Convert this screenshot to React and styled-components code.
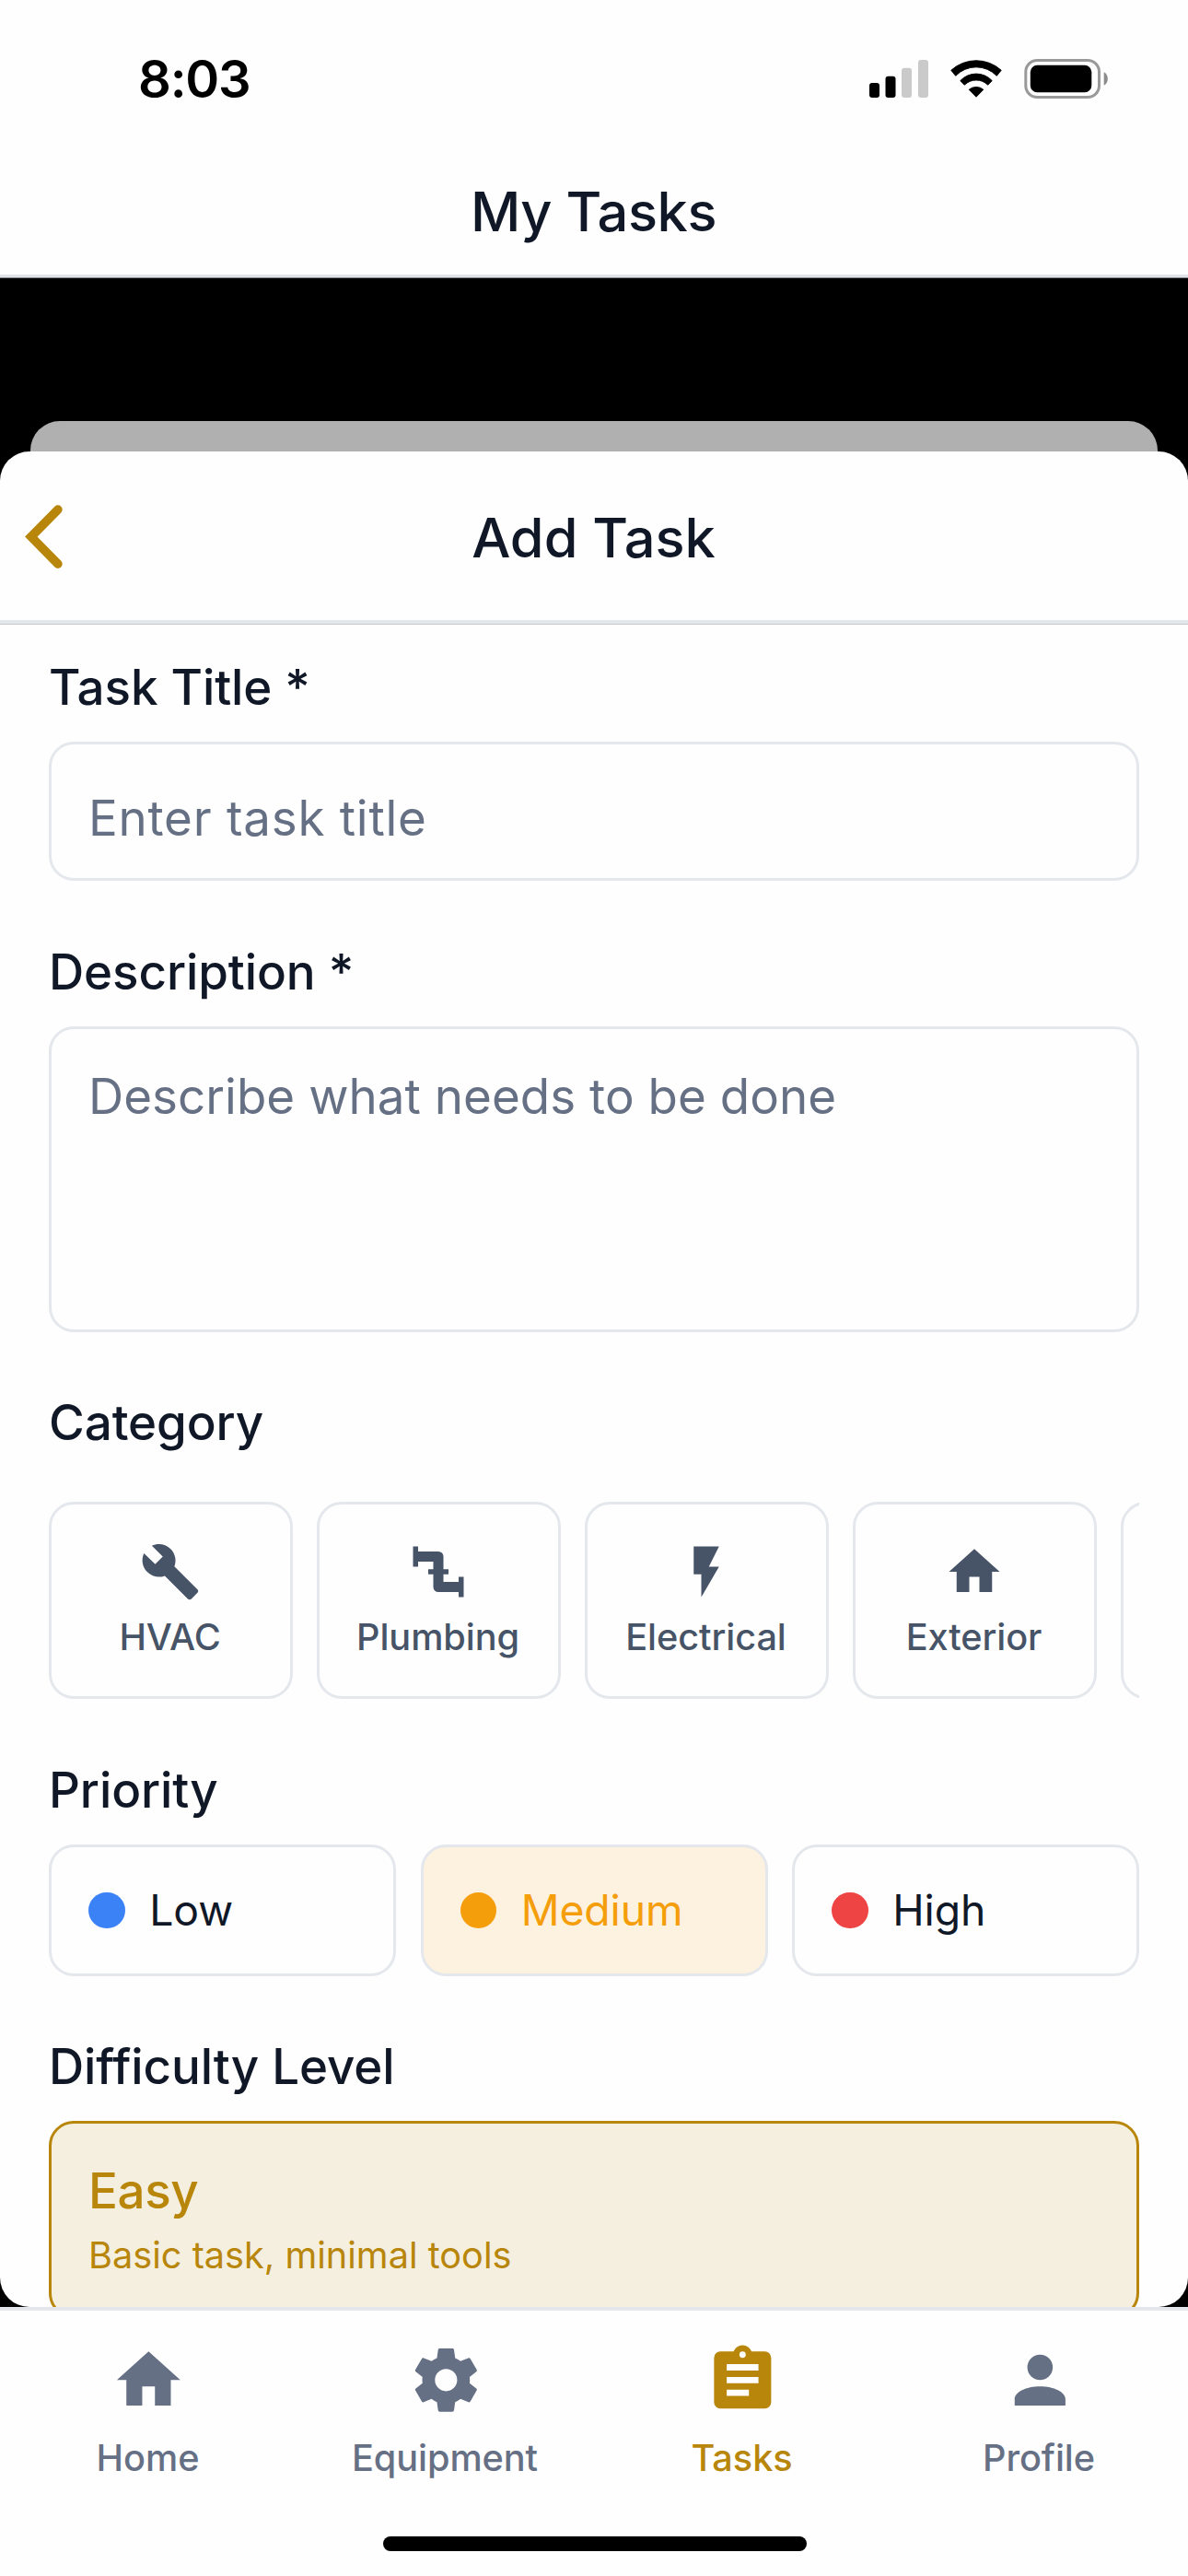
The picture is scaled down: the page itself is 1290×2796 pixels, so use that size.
import React from "react";
import styled, { createGlobalStyle } from "styled-components";

const c = {
  text: "#101828",
  secondary: "#475467",
  muted: "#667085",
  border: "#e4e7ec",
  surface: "#fefefe",
  gold: "#b8860b",
  goldTint: "#f5efdf",
  amber: "#f59e0b",
  amberTint: "#fdf1e0",
};

const GlobalStyle = createGlobalStyle`
  *, *::before, *::after { box-sizing: border-box; }
  body { margin: 0; background: #000; font-family: Inter, "Liberation Sans", sans-serif; }
`;

const Screen = styled.div`
  width: 1290px;
  height: 2796px;
  display: flex;
  flex-direction: column;
  overflow: hidden;
  background: #000;
  color: ${c.text};
  letter-spacing: -0.08px;
`;

const TopBar = styled.header`
  height: 302px;
  flex: none;
  display: flex;
  flex-direction: column;
  background: ${c.surface};
  border-bottom: 1px solid #8a8a8c;
  box-shadow: inset 0 -3px 0 #e0e3e8;
`;

const StatusBar = styled.div`
  height: 172px;
  padding: 0 87px 0 150px;
  display: flex;
  align-items: center;
  justify-content: space-between;
`;

const Clock = styled.span`
  font-size: 56px;
  font-weight: 600;
  line-height: 60px;
  letter-spacing: -1.2px;
  color: #000;
`;

const ScreenTitle = styled.h1`
  margin: 0;
  text-align: center;
  font-size: 59.5px;
  line-height: 72px;
  font-weight: 500;
  padding: ${(p) => p.$top || 0}px 1px 0 0;
  letter-spacing: ${(p) => p.$tracking || 0}px;
`;

const Backdrop = styled.main`
  flex: none;
  height: 2202px;
  padding-top: 155px;
  display: flex;
  flex-direction: column;
`;

const SheetBehind = styled.div`
  flex: none;
  height: 66px;
  margin: 0 33px -33px;
  border-radius: 32px 32px 0 0;
  background: #b0b0b0;
`;

const Sheet = styled.section`
  flex: 1;
  min-height: 0;
  display: flex;
  flex-direction: column;
  overflow: hidden;
  border-radius: 32px;
  background: ${c.surface};
  z-index: 1;
`;

const SheetHeader = styled.div`
  flex: none;
  height: 188px;
  padding-bottom: 1px;
  display: grid;
  grid-template-columns: 120px 1fr 120px;
  align-items: center;
  border-bottom: 1px solid #c6c8ca;
  box-shadow: inset 0 -4px 0 #e4e7ea;
`;

const BackButton = styled.button`
  border: 0;
  background: none;
  padding: 0 0 0 27px;
  height: 70px;
  display: flex;
`;

const Form = styled.div`
  flex: none;
  display: flex;
  flex-direction: column;
  padding: 36px 53px 0;
`;

const Field = styled.div`
  display: flex;
  flex-direction: column;
  gap: ${(p) => p.$gap || 27}px;
  margin-bottom: ${(p) => p.$after || 67}px;
`;

const Label = styled.div`
  font-size: 52.9px;
  line-height: 64px;
  font-weight: 500;
`;

const InputBox = styled.div`
  height: ${(p) => p.$height}px;
  padding: ${(p) => p.$top}px 40px 0;
  border: 3px solid ${c.border};
  border-radius: 27px;
  color: ${c.muted};
  font-size: 52.9px;
  line-height: 64px;
  letter-spacing: ${(p) => p.$tracking || 0}px;
`;

const CategoryRow = styled.div`
  display: flex;
  gap: 26.4px;
  overflow: hidden;
`;

const CategoryCard = styled.div`
  flex: none;
  width: 264.6px;
  height: 214px;
  padding-top: 40px;
  display: flex;
  flex-direction: column;
  align-items: center;
  gap: 14px;
  border: 3px solid ${c.border};
  border-radius: 27px;
  color: ${c.secondary};
`;

const Caption = styled.span`
  margin-right: 1.5px;
  font-size: 39.7px;
  line-height: 48px;
  font-weight: 500;
`;

const PriorityRow = styled.div`
  display: grid;
  grid-template-columns: repeat(3, 1fr);
  gap: 26.5px;
`;

const PriorityOption = styled.div`
  height: 143px;
  padding-left: 40px;
  display: flex;
  align-items: center;
  gap: 26.5px;
  border: 3px solid ${c.border};
  border-radius: 27px;
  font-size: 46.3px;
  line-height: 56px;
  color: ${(p) => (p.$selected ? p.$color : c.text)};
  background: ${(p) => (p.$selected ? c.amberTint : "transparent")};
`;

const PriorityName = styled.span`
  padding-bottom: 2px;
`;

const Dot = styled.span`
  width: 39.7px;
  height: 39.7px;
  border-radius: 50%;
  background: ${(p) => p.$color};
`;

const DifficultyCard = styled.div`
  display: flex;
  flex-direction: column;
  gap: 14px;
  padding: 41px 40px;
  border: 3px solid ${c.gold};
  border-radius: 27px;
  background: ${c.goldTint};
  color: ${c.gold};
`;

const DifficultyName = styled.div`
  font-size: 52.9px;
  line-height: 64px;
  font-weight: 500;
  letter-spacing: -0.4px;
`;

const DifficultyHint = styled.div`
  font-size: 39.7px;
  line-height: 48px;
  letter-spacing: 0;
`;

const TabBar = styled.nav`
  flex: none;
  height: 292px;
  display: flex;
  flex-direction: column;
  justify-content: space-between;
  align-items: center;
  padding: 34px 0 27px;
  border-top: 4px solid ${c.border};
  background: ${c.surface};
`;

const Tabs = styled.div`
  width: 100%;
  display: grid;
  grid-template-columns: repeat(4, 1fr);
`;

const Tab = styled.div`
  display: flex;
  flex-direction: column;
  align-items: center;
  gap: 19px;
  color: ${(p) => (p.$active ? c.gold : c.muted)};

  svg {
    margin-left: 1px;
  }
`;

const HomeIndicator = styled.div`
  width: 460px;
  height: 16px;
  margin-left: 1px;
  border-radius: 8px;
  background: #000;
`;

const paths = {
  wrench:
    "M22.7,19L13.6,9.9C14.5,7.6 14,4.9 12.1,3C10.1,1 7.1,0.6 4.7,1.7L9,6L6,9L1.6,4.7C0.4,7.1 0.9,10.1 2.9,12.1C4.8,14 7.5,14.5 9.8,13.6L18.9,22.7C19.3,23.1 19.9,23.1 20.3,22.7L22.6,20.4C23.1,20 23.1,19.3 22.7,19Z",
  pipe: "M22,14H20V16H14V13H16V11H14V6A2,2 0 0,0 12,4H4V2H2V10H4V8H10V11H8V13H10V18A2,2 0 0,0 12,20H20V22H22Z",
  flash: "M7,2V13H10V22L17,10H13L17,2H7Z",
  home: "M10,20V14H14V20H19V12H22L12,3L2,12H5V20H10Z",
  cog: "M12,15.5A3.5,3.5 0 0,1 8.5,12A3.5,3.5 0 0,1 12,8.5A3.5,3.5 0 0,1 15.5,12A3.5,3.5 0 0,1 12,15.5M19.43,12.97C19.47,12.65 19.5,12.33 19.5,12C19.5,11.67 19.47,11.34 19.43,11L21.54,9.37C21.73,9.22 21.78,8.95 21.66,8.73L19.66,5.27C19.54,5.05 19.27,4.96 19.05,5.05L16.56,6.05C16.04,5.66 15.5,5.32 14.87,5.07L14.5,2.42C14.46,2.18 14.25,2 14,2H10C9.75,2 9.54,2.18 9.5,2.42L9.13,5.07C8.5,5.32 7.96,5.66 7.44,6.05L4.95,5.05C4.73,4.96 4.46,5.05 4.34,5.27L2.34,8.73C2.21,8.95 2.27,9.22 2.46,9.37L4.57,11C4.53,11.34 4.5,11.67 4.5,12C4.5,12.33 4.53,12.65 4.57,12.97L2.46,14.63C2.27,14.78 2.21,15.05 2.34,15.27L4.34,18.73C4.46,18.95 4.73,19.03 4.95,18.95L7.44,17.94C7.96,18.34 8.5,18.68 9.13,18.93L9.5,21.58C9.54,21.82 9.75,22 10,22H14C14.25,22 14.46,21.82 14.5,21.58L14.87,18.93C15.5,18.67 16.04,18.34 16.56,17.94L19.05,18.95C19.27,19.03 19.54,18.95 19.66,18.73L21.66,15.27C21.78,15.05 21.73,14.78 21.54,14.63L19.43,12.97Z",
  clipboard:
    "M17,9H7V7H17M17,13H7V11H17M14,17H7V15H14M12,3A1,1 0 0,1 13,4A1,1 0 0,1 12,5A1,1 0 0,1 11,4A1,1 0 0,1 12,3M19,3H14.82C14.4,1.84 13.3,1 12,1C10.7,1 9.6,1.84 9.18,3H5A2,2 0 0,0 3,5V19A2,2 0 0,0 5,21H19A2,2 0 0,0 21,19V5A2,2 0 0,0 19,3Z",
  account:
    "M12,4A4,4 0 0,1 16,8A4,4 0 0,1 12,12A4,4 0 0,1 8,8A4,4 0 0,1 12,4M12,14C16.42,14 20,15.79 20,18V20H4V18C4,15.79 7.58,14 12,14Z",
};

const Icon = ({ name, size }) => (
  <svg width={size} height={size} viewBox="0 0 24 24" fill="currentColor" aria-hidden="true">
    <path d={paths[name]} />
  </svg>
);

const StatusIcons = () => (
  <svg width="260" height="44" viewBox="943 64 260 44" aria-hidden="true">
    <rect x="944" y="90" width="11" height="16" rx="3" />
    <rect x="961.5" y="82.7" width="11" height="23.3" rx="3" />
    <rect x="979" y="73.7" width="11" height="32.3" rx="3" fill="#cacaca" />
    <rect x="997" y="65" width="11" height="41" rx="3" fill="#cacaca" />
    <g stroke="#000" strokeWidth="1" strokeLinejoin="round">
      <path d="M1032.8 76.3A40.4 40.4 0 0 1 1087.2 76.3L1082.3 82.3A31 31 0 0 0 1037.7 82.3Z" />
      <path d="M1042.8 87.6A23.5 23.5 0 0 1 1077.2 87.6L1072.7 92.2A18 18 0 0 0 1047.3 92.2Z" />
      <path d="M1052.2 97.3A12 12 0 0 1 1067.8 97.3L1060 105.2Z" />
    </g>
    <rect x="1113.8" y="65.5" width="79.7" height="40" rx="12.5" fill="none" stroke="#999" strokeWidth="3" />
    <rect x="1118.8" y="70.7" width="66.5" height="29.6" rx="7.5" />
    <path d="M1198.7 78.3C1204.2 80.6 1204.2 90.4 1198.7 92.7Z" fill="#8c8c8c" />
  </svg>
);

const categories = [
  { icon: "wrench", name: "HVAC" },
  { icon: "pipe", name: "Plumbing" },
  { icon: "flash", name: "Electrical" },
  { icon: "home", name: "Exterior" },
  {},
];

const priorities = [
  { name: "Low", color: "#3b82f6" },
  { name: "Medium", color: c.amber, selected: true },
  { name: "High", color: "#ef4444" },
];

const tabs = [
  { icon: "home", name: "Home" },
  { icon: "cog", name: "Equipment" },
  { icon: "clipboard", name: "Tasks", active: true },
  { icon: "account", name: "Profile" },
];

export default function App() {
  return (
    <Screen>
      <GlobalStyle />
      <TopBar>
        <StatusBar>
          <Clock>8:03</Clock>
          <StatusIcons />
        </StatusBar>
        <ScreenTitle $top={21} $tracking={-0.4}>My Tasks</ScreenTitle>
      </TopBar>
      <Backdrop>
        <SheetBehind />
        <Sheet>
          <SheetHeader>
            <BackButton aria-label="Back">
              <svg width="41" height="70" viewBox="0 0 41 70" fill="none" stroke={c.gold} strokeWidth="9.6" strokeLinecap="round" strokeLinejoin="miter">
                <path d="M35.9 5.1L6.8 34.6L35.9 64.2" />
              </svg>
            </BackButton>
            <ScreenTitle>Add Task</ScreenTitle>
          </SheetHeader>
          <Form>
            <Field>
              <Label>Task Title *</Label>
              <InputBox $height={151} $top={48} $tracking={0.75}>Enter task title</InputBox>
            </Field>
            <Field $after={66}>
              <Label>Description *</Label>
              <InputBox $height={332} $top={41} $tracking={0.04}>Describe what needs to be done</InputBox>
            </Field>
            <Field $gap={54}>
              <Label>Category</Label>
              <CategoryRow>
                {categories.map((item, i) => (
                  <CategoryCard key={i}>
                    {item.icon && <Icon name={item.icon} size={66} />}
                    {item.name && <Caption>{item.name}</Caption>}
                  </CategoryCard>
                ))}
              </CategoryRow>
            </Field>
            <Field $after={66}>
              <Label>Priority</Label>
              <PriorityRow>
                {priorities.map((p) => (
                  <PriorityOption key={p.name} $color={p.color} $selected={p.selected}>
                    <Dot $color={p.color} />
                    <PriorityName>{p.name}</PriorityName>
                  </PriorityOption>
                ))}
              </PriorityRow>
            </Field>
            <Field>
              <Label>Difficulty Level</Label>
              <DifficultyCard>
                <DifficultyName>Easy</DifficultyName>
                <DifficultyHint>Basic task, minimal tools</DifficultyHint>
              </DifficultyCard>
            </Field>
          </Form>
        </Sheet>
      </Backdrop>
      <TabBar>
        <Tabs>
          {tabs.map((t) => (
            <Tab key={t.name} $active={t.active}>
              <Icon name={t.icon} size={82.7} />
              <Caption>{t.name}</Caption>
            </Tab>
          ))}
        </Tabs>
        <HomeIndicator />
      </TabBar>
    </Screen>
  );
}
